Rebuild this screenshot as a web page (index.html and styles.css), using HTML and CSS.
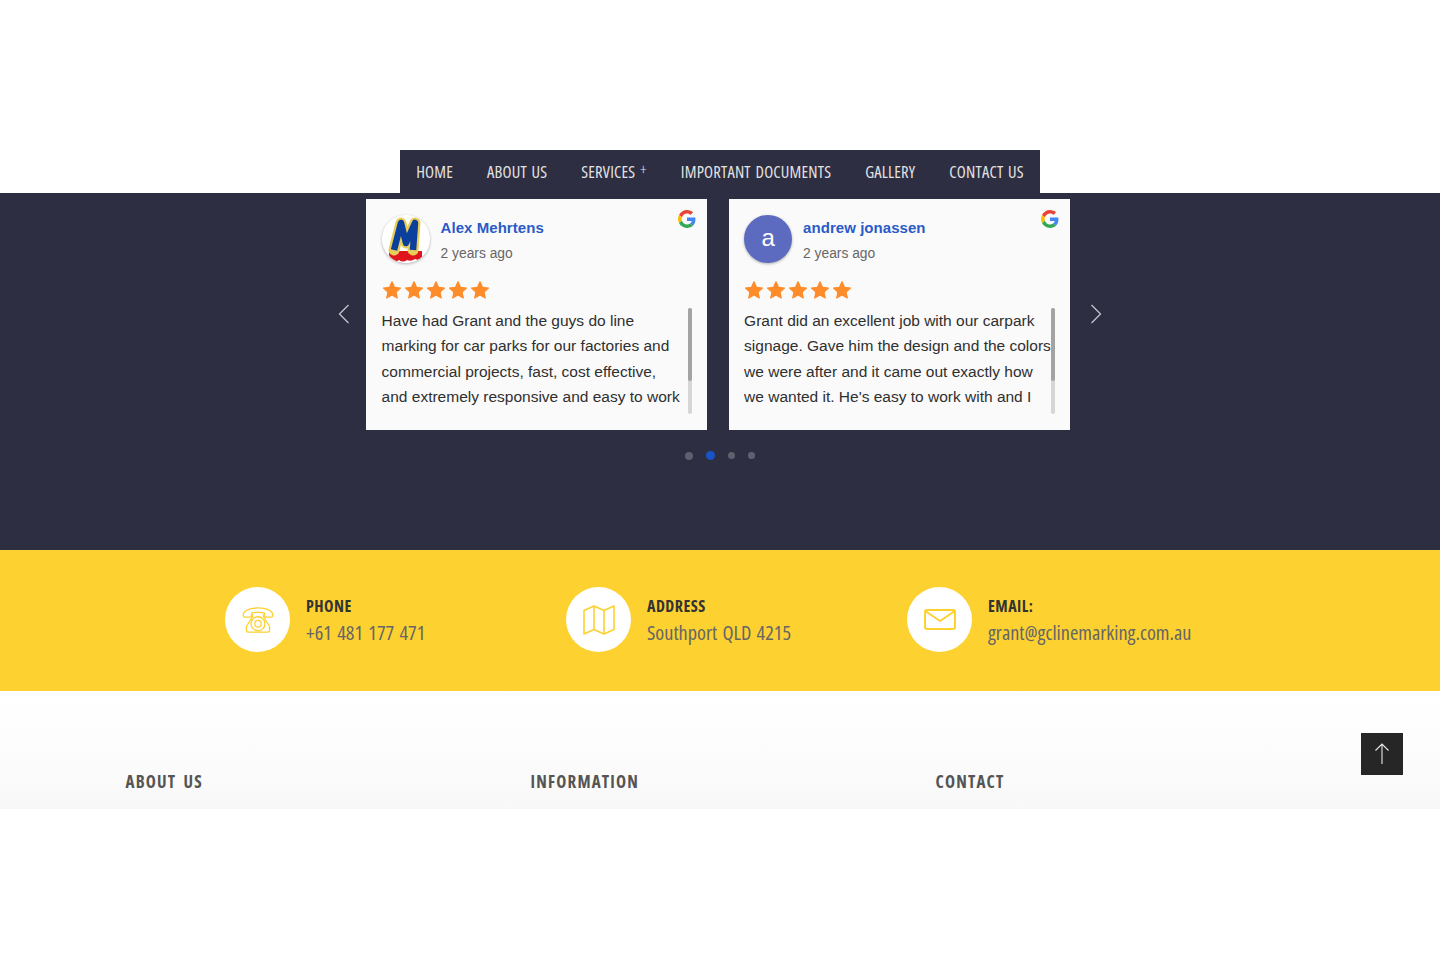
FILE: index.html
```html
<!DOCTYPE html>
<html lang="en">
<head>
    <meta charset="UTF-8">
    <meta name="viewport" content="width=device-width, initial-scale=1.0">
    <title>GC Line Marking</title>
    <link rel="stylesheet" href="styles.css">
</head>
<body>
    <svg class="defs" width="0" height="0">
        <symbol id="star" viewBox="0 0 20 20">
            <path d="M10 1.800l2.500 5.500 6 .7-4.400 4.100 1.200 5.900-5.300-3-5.300 3 1.200-5.900L1.500 8l6-.7z" fill="#fe8c2a" stroke="#fe8c2a" stroke-width="1.200" stroke-linejoin="round"/>
        </symbol>
        <symbol id="google" viewBox="0 0 48 48">
            <path fill="#ea4335" d="M24 9.500c3.500 0 6.700 1.200 9.200 3.600l6.900-6.900C35.900 2.400 30.500 0 24 0 14.600 0 6.500 5.400 2.600 13.200l8 6.200C12.500 13.700 17.800 9.500 24 9.500z"/>
            <path fill="#4285f4" d="M46.500 24.500c0-1.600-.1-3.100-.4-4.500H24v9h12.700c-.5 2.900-2.200 5.400-4.700 7l7.700 6c4.500-4.200 6.800-10.300 6.800-17.500z"/>
            <path fill="#fbbc05" d="M10.500 28.600c-.5-1.400-.8-3-.8-4.600s.3-3.200.8-4.600l-8-6.200C.9 16.500 0 20.100 0 24s.9 7.500 2.600 10.800l7.900-6.200z"/>
            <path fill="#34a853" d="M24 48c6.500 0 11.900-2.100 15.900-5.800L32 36.200c-2.100 1.500-4.900 2.300-8 2.300-6.200 0-11.500-4.200-13.400-9.900l-8 6.200C6.500 42.600 14.600 48 24 48z"/>
        </symbol>
    </svg>

    <div class="top-space"></div>

    <nav class="nav-wrap">
        <ul class="nav">
            <li><a href="#">Home</a></li>
            <li><a href="#">About Us</a></li>
            <li><a href="#">Services <span class="plus">+</span></a></li>
            <li><a href="#">Important Documents</a></li>
            <li><a href="#">Gallery</a></li>
            <li><a href="#">Contact Us</a></li>
        </ul>
    </nav>

    <!-- Reviews -->
    <section class="reviews">
        <div class="carousel">
            <button class="arrow prev" aria-label="Previous">
                <svg width="12" height="20" viewBox="0 0 12 20"><path d="M10.500 1 1.500 10l9 9" fill="none" stroke="#c4c4cc" stroke-width="1.300"/></svg>
            </button>

            <article class="card">
                <div class="card-head">
                    <svg class="avatar" width="48" height="48" viewBox="0 0 48 48">
                        <circle cx="24" cy="24" r="24" fill="#fff"/>
                        <path d="M7 36h33v6q-3 4-7 2-4 3-8 1-4 3-8 0-4 3-7-1-2-1-3-4z" fill="#e0141c"/>
                        <polyline points="12,35 19,8 24,28 33,8 31,35" fill="none" stroke="#e8cd5a" stroke-width="11" stroke-linejoin="round" stroke-linecap="round"/>
                        <polyline points="12,35 19,8 24,28 33,8 31,35" fill="none" stroke="#0b3f9c" stroke-width="6.500" stroke-linejoin="round"/>
                    </svg>
                    <div class="who">
                        <a class="name" href="#">Alex Mehrtens</a>
                        <div class="when">2 years ago</div>
                    </div>
                    <svg class="g-logo" width="18" height="18"><use href="#google"/></svg>
                </div>
                <div class="stars">
                    <svg width="20" height="20"><use href="#star"/></svg>
                    <svg width="20" height="20"><use href="#star"/></svg>
                    <svg width="20" height="20"><use href="#star"/></svg>
                    <svg width="20" height="20"><use href="#star"/></svg>
                    <svg width="20" height="20"><use href="#star"/></svg>
                </div>
                <div class="review-body">
                    <p class="review-text">Have had Grant and the guys do line<br>marking for car parks for our factories and<br>commercial projects, fast, cost effective,<br>and extremely responsive and easy to work</p>
                    <div class="track"><div class="thumb"></div></div>
                </div>
            </article>

            <article class="card">
                <div class="card-head">
                    <div class="avatar letter">a</div>
                    <div class="who">
                        <a class="name" href="#">andrew jonassen</a>
                        <div class="when">2 years ago</div>
                    </div>
                    <svg class="g-logo" width="18" height="18"><use href="#google"/></svg>
                </div>
                <div class="stars">
                    <svg width="20" height="20"><use href="#star"/></svg>
                    <svg width="20" height="20"><use href="#star"/></svg>
                    <svg width="20" height="20"><use href="#star"/></svg>
                    <svg width="20" height="20"><use href="#star"/></svg>
                    <svg width="20" height="20"><use href="#star"/></svg>
                </div>
                <div class="review-body">
                    <p class="review-text">Grant did an excellent job with our carpark<br>signage. Gave him the design and the colors<br>we were after and it came out exactly how<br>we wanted it. He's easy to work with and I</p>
                    <div class="track"><div class="thumb"></div></div>
                </div>
            </article>

            <button class="arrow next" aria-label="Next">
                <svg width="12" height="20" viewBox="0 0 12 20"><path d="M1.500 1l9 9-9 9" fill="none" stroke="#c4c4cc" stroke-width="1.300"/></svg>
            </button>
        </div>

        <div class="dots">
            <span class="dot"></span>
            <span class="dot active"></span>
            <span class="dot mid"></span>
            <span class="dot small"></span>
        </div>
    </section>

    <!-- Contact strip -->
    <section class="contact-strip">
        <div class="contact-grid">
            <div class="contact-item">
                <div class="icon-circle">
                    <svg width="32" height="26" viewBox="0 0 34 28" fill="none" stroke="#fdd130" stroke-width="1.400" stroke-linejoin="round">
                        <path d="M1 9C1 4 8 1 17 1s16 3 16 8c0 1.500-1 2-2.500 2H26c-1.500 0-2-1-2-2V6.500C22 5.500 12 5.500 10 6.500V9c0 1-.5 2-2 2H3.500C2 11 1 10.500 1 9z"/>
                        <path d="M11 7.500v3L4.500 21v4c0 1 .5 2 2 2h21c1.500 0 2-1 2-2v-4L23 10.500v-3"/>
                        <circle cx="17" cy="18" r="7.500"/>
                        <circle cx="17" cy="18" r="3.500"/>
                    </svg>
                </div>
                <div class="contact-text">
                    <h4>Phone</h4>
                    <p>+61 481 177 471</p>
                </div>
            </div>
            <div class="contact-item">
                <div class="icon-circle">
                    <svg width="32" height="30" viewBox="0 0 32 30" fill="none" stroke="#fdd130" stroke-width="1.600" stroke-linejoin="round">
                        <path d="M1 5.500 11 1l10 4.500L31 1v23.500L21 29l-10-4.500L1 29z"/>
                        <path d="M11 1v23.500M21 5.500V29"/>
                    </svg>
                </div>
                <div class="contact-text">
                    <h4>Address</h4>
                    <p>Southport QLD 4215</p>
                </div>
            </div>
            <div class="contact-item">
                <div class="icon-circle">
                    <svg width="32" height="21" viewBox="0 0 32 21" fill="none" stroke="#fdd130" stroke-width="2" stroke-linejoin="round">
                        <rect x="1" y="1" width="30" height="19" rx="2"/>
                        <path d="M2 2.500 16 12 30 2.500"/>
                    </svg>
                </div>
                <div class="contact-text">
                    <h4>Email:</h4>
                    <p>grant@gclinemarking.com.au</p>
                </div>
            </div>
        </div>
    </section>

    <footer class="footer">
        <div class="footer-grid">
            <h3>About Us</h3>
            <h3>Information</h3>
            <h3>Contact</h3>
        </div>
    </footer>

    <a href="#" class="back-top" aria-label="Back to top">
        <svg width="16" height="22" viewBox="0 0 16 22"><path d="M8 21V1M1.500 7.500 8 1l6.500 6.500" fill="none" stroke="#e8e8e8" stroke-width="1.100"/></svg>
    </a>
</body>
</html>
```

FILE: styles.css
```css
:root {
    --navy: #2e2e42;
    --yellow: #fdd130;
    --narrow: "Open Sans", sans-serif;
}

* {
    margin: 0;
    padding: 0;
    box-sizing: border-box;
}

body {
    background-color: #fff;
    font-family: "Liberation Sans", Arial, sans-serif;
}

.defs {
    position: absolute;
}

.top-space {
    height: 150px;
}

.nav-wrap {
    display: flex;
    justify-content: center;
}

.nav {
    display: flex;
    list-style: none;
    background-color: var(--navy);
    padding: 0 16px;
    height: 43px;
}

.nav a {
    display: block;
    padding: 0 17px;
    line-height: 44px;
    color: #e3e3e3;
    font-family: var(--narrow);
    font-stretch: 75%;
    font-size: 16.500px;
    letter-spacing: 0.2px;
    word-spacing: 1.500px;
    text-transform: uppercase;
    text-decoration: none;
}

.nav li:first-child a {
    padding-left: 0;
}

.nav li:last-child a {
    padding-right: 0;
}

.plus {
    font-size: 16px;
    font-weight: 300;
    line-height: 0;
    vertical-align: 3px;
}

.reviews {
    background-color: var(--navy);
    height: 357px;
    padding-top: 6px;
}

.carousel {
    display: flex;
    justify-content: center;
    align-items: center;
}

.arrow {
    background: none;
    border: none;
    cursor: pointer;
    display: flex;
    margin-top: -1px;
}

.arrow.prev {
    margin-right: 16px;
}

.arrow.next {
    margin-left: 20.500px;
}

.card {
    width: 341px;
    height: 231px;
    padding: 16px 15px 0 15.600px;
    background-color: #fafafa;
}

.card + .card {
    margin-left: 21.500px;
}

.card-head {
    display: flex;
    position: relative;
}

.avatar {
    flex: none;
    width: 48px;
    height: 48px;
    border-radius: 50%;
    box-shadow: 0 1px 3px rgba(0,0,0,0.3);
}

.avatar.letter {
    background-color: #5c6bc0;
    color: #fff;
    font-size: 24px;
    line-height: 46px;
    text-align: center;
}

.who {
    margin-left: 11px;
    padding-top: 3px;
}

.name {
    display: block;
    color: #2a5bc8;
    font-size: 15px;
    font-weight: bold;
    letter-spacing: 0.05px;
    line-height: 20px;
    text-decoration: none;
}

.when {
    margin-top: 6px;
    color: #666;
    font-size: 13.800px;
    line-height: 20px;
}

.g-logo {
    position: absolute;
    top: -5px;
    right: -4px;
}

.stars {
    display: flex;
    gap: 2.100px;
    margin-top: 16px;
    height: 22px;
}

.review-body {
    display: flex;
    margin-top: 6px;
    height: 106px;
}

.review-text {
    flex: 1;
    color: #2f2f2f;
    font-size: 15.500px;
    line-height: 25.300px;
    white-space: nowrap;
}

.track {
    flex: none;
    width: 4px;
    height: 106px;
    border-radius: 2px;
    background-color: #d6d6d6;
}

.thumb {
    height: 73px;
    border-radius: 2px;
    background-color: #a3a3a3;
}

.dots {
    display: flex;
    justify-content: center;
    align-items: center;
    gap: 13px;
    margin: 21px 0 0 -1px;
}

.dot {
    width: 8px;
    height: 8px;
    border-radius: 50%;
    background-color: #5f5f6e;
}

.dot.active {
    width: 9px;
    height: 9px;
    background-color: #1a53c7;
}

.dot.mid {
    width: 7.500px;
    height: 7.500px;
}

.dot.small {
    width: 6.500px;
    height: 6.500px;
}

.contact-strip {
    background-color: var(--yellow);
    height: 141px;
    padding-top: 37px;
}

.contact-grid {
    width: 1024px;
    margin: 0 auto;
    display: grid;
    grid-template-columns: repeat(3, 341px);
}

.contact-item {
    display: flex;
    gap: 16px;
    padding-left: 17px;
}

.icon-circle {
    flex: none;
    width: 65px;
    height: 65px;
    border-radius: 50%;
    background-color: #fff;
    display: flex;
    justify-content: center;
    align-items: center;
}

.contact-text {
    padding-top: 8px;
}

.contact-text h4 {
    color: #333;
    font-family: var(--narrow);
    font-stretch: 75%;
    font-size: 16px;
    font-weight: bold;
    letter-spacing: 0.5px;
    line-height: 22px;
    text-transform: uppercase;
}

.contact-text p {
    margin-top: 1px;
    color: #666;
    font-family: var(--narrow);
    font-stretch: 75%;
    font-size: 20.300px;
    word-spacing: 1.500px;
    line-height: 28px;
}

.footer {
    height: 118px;
    padding-top: 80px;
    background: linear-gradient(#fff, #fdfdfd 45%, #f8f8f8);
}

.footer-grid {
    width: 1215px;
    margin: 0 auto;
    padding-left: 13px;
    display: grid;
    grid-template-columns: repeat(3, 405px);
}

.footer-grid h3 {
    color: #555;
    font-family: var(--narrow);
    font-stretch: 75%;
    font-size: 17px;
    font-weight: bold;
    letter-spacing: 1.200px;
    word-spacing: 3px;
    line-height: 22px;
    text-transform: uppercase;
}

.back-top {
    position: fixed;
    left: 1361px;
    top: 733px;
    width: 42px;
    height: 42px;
    background-color: #262626;
    display: flex;
    justify-content: center;
    align-items: center;
}
```
